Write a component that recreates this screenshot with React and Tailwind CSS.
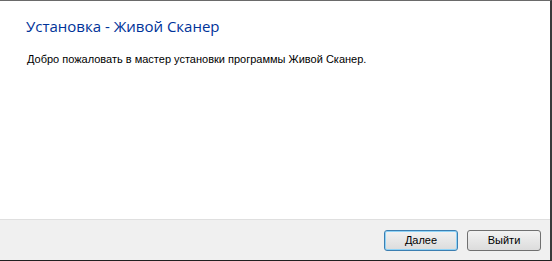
import React from 'react';

function WizardButton({ children, focused }) {
  return (
    <button
      className={`
        w-[74px] h-[21px] rounded-[3px] text-[11px] text-black leading-none
        bg-gradient-to-b from-[#f2f2f2] to-[#dcdcdc]
        ${focused ? 'border border-[#3c7fb1] shadow-[inset_0_0_0_1px_#8fd3f7]' : 'border border-[#707070]'}
      `}
      style={{ fontFamily: '"Liberation Sans", Arial, sans-serif' }}
    >
      {children}
    </button>
  );
}

export default function App() {
  return (
    <div className="w-[552px] h-[261px] flex flex-col bg-white border-t border-t-[#6a6a6a] border-r-2 border-r-[#3a3a3a] border-b border-b-[#202020]">
      {/* Content */}
      <div className="flex-1 px-[26px] pt-[15px]">
        <h1
          className="text-[15px] text-[#003399] leading-[20px]"
          style={{ fontFamily: '"Open Sans", "Noto Sans", sans-serif' }}
        >
          Установка - Живой Сканер
        </h1>
        <p
          className="mt-[16px] ml-px text-[11px] text-black leading-[14px]"
          style={{ fontFamily: '"Liberation Sans", Arial, sans-serif' }}
        >
          Добро пожаловать в мастер установки программы Живой Сканер.
        </p>
      </div>

      {/* Footer */}
      <div className="h-[41px] bg-[#f0f0f0] border-t border-t-[#dfdfdf] flex items-center justify-end gap-[9px] pr-[9px]">
        <WizardButton focused>Далее</WizardButton>
        <WizardButton>Выйти</WizardButton>
      </div>
    </div>
  );
}
